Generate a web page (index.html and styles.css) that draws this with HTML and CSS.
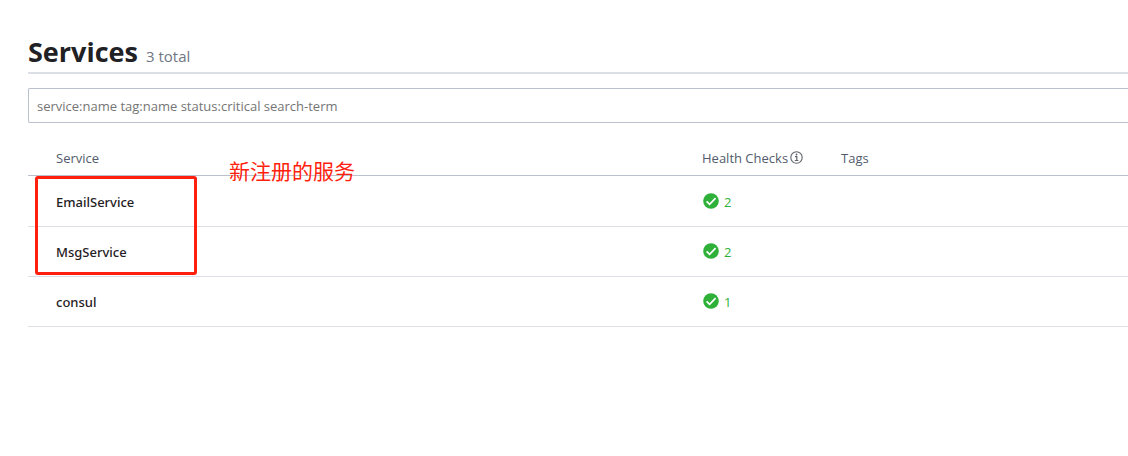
FILE: index.html
```html
<!DOCTYPE html>
<html lang="en">
<head>
<meta charset="utf-8">
<title>Services</title>
<link rel="stylesheet" href="styles.css">
</head>
<body>
<svg class="sprite" aria-hidden="true">
  <symbol id="check" viewBox="0 0 16 16">
    <circle cx="8" cy="8" r="7.8" fill="#2eb039"/>
    <path d="M3.6 8.3l3 3 6-6.2" fill="none" stroke="#fff" stroke-width="1.7"/>
  </symbol>
</svg>
<main class="page">
  <header class="page-header">
    <h1 class="title">Services</h1>
    <span class="total">3 total</span>
  </header>
  <form class="filter">
    <input class="search" type="text" aria-label="Search services" placeholder="service:name tag:name status:critical search-term">
  </form>
  <div class="listing">
    <table class="services">
      <colgroup><col><col class="col-health"><col class="col-tags"></colgroup>
      <thead>
        <tr>
          <th class="name" scope="col">Service</th>
          <th scope="col"><span class="label">Health Checks
            <svg class="info" viewBox="0 0 13 13" aria-hidden="true">
              <circle cx="6.5" cy="6.5" r="5.7" fill="none" stroke="#60646c" stroke-width="1.1"/>
              <path d="M5 5.6h1.8v3.8M4.8 9.5h3.6" fill="none" stroke="#60646c" stroke-width="1.2"/>
              <circle cx="6.5" cy="3.5" r=".9" fill="#60646c"/>
            </svg></span></th>
          <th scope="col">Tags</th>
        </tr>
      </thead>
      <tbody>
        <tr>
          <td class="name"><a href="#EmailService">EmailService</a></td>
          <td><span class="health"><svg class="check"><use href="#check"/></svg>2</span></td>
          <td></td>
        </tr>
        <tr>
          <td class="name"><a href="#MsgService">MsgService</a></td>
          <td><span class="health"><svg class="check"><use href="#check"/></svg>2</span></td>
          <td></td>
        </tr>
        <tr>
          <td class="name"><a href="#consul">consul</a></td>
          <td><span class="health"><svg class="check"><use href="#check"/></svg>1</span></td>
          <td></td>
        </tr>
      </tbody>
    </table>
    <div class="highlight"></div>
    <div class="note" lang="zh-CN">新注册的服务</div>
  </div>
</main>
</body>
</html>
```
FILE: styles.css
```css
* { box-sizing: border-box; }

body {
  margin: 0;
  background: #fff;
  color: #1f2124;
  font: 13px/20px "Segoe UI", "Open Sans", "Noto Sans", sans-serif;
}

.sprite { position: absolute; width: 0; height: 0; }

.page { padding: 33px 0 0 28px; }

.page-header {
  display: flex;
  align-items: baseline;
  gap: 8px;
  padding-bottom: 1px;
  border-bottom: 2px solid #dce0e6;
}

.title { margin: 0; font-size: 27px; line-height: 38px; font-weight: 700; }

.total { font-size: 15px; color: #6f7682; }

.filter { margin: 14px 0 0; }

.search {
  display: block;
  width: 100%;
  height: 35px;
  padding: 0 8px;
  border: 1px solid #bac1cc;
  border-right: 0;
  border-radius: 2px 0 0 2px;
  font: inherit;
}

.search::placeholder { color: #757575; opacity: 1; }

.listing { position: relative; }

.services {
  width: 100%;
  table-layout: fixed;
  border-collapse: separate;
  border-spacing: 0;
}

.col-health { width: 139px; }
.col-tags { width: 287px; }

th, td { padding: 0; text-align: left; }

th {
  height: 53px;
  padding-top: 18px;
  border-bottom: 1px solid #bac1cc;
  color: #525b6b;
  font-weight: 500;
}

td { height: 50px; border-bottom: 1px solid #dce0e6; }
tbody tr:first-child td { height: 51px; padding-top: 1px; }

.services .name { padding-left: 28px; }

.name a {
  color: #1f2124;
  font-family: "Segoe UI", "Noto Sans", sans-serif;
  font-weight: 500;
  text-decoration: none;
}

.label { display: flex; align-items: center; gap: 2px; }

.info { width: 13px; height: 13px; margin-bottom: 1px; }

.health {
  display: flex;
  align-items: center;
  gap: 5px;
  padding-left: 1px;
  color: #2eb039;
}

.check { width: 16px; height: 16px; margin-bottom: 2px; }

.highlight {
  position: absolute;
  top: 53px;
  left: 7px;
  width: 162px;
  height: 99px;
  border: 3px solid #ff1f0f;
  border-radius: 3px;
}

.note {
  position: absolute;
  top: 32px;
  left: 201px;
  color: #ff1f0f;
  font: 21px/30px "Noto Sans CJK SC", sans-serif;
}
```
